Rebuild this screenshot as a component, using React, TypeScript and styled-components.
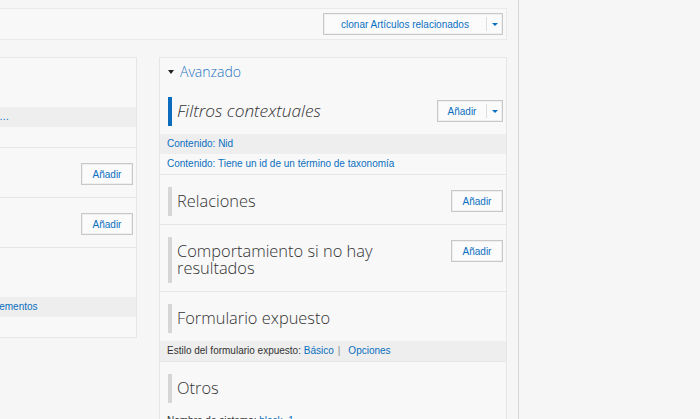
import React from "react";
import styled, { createGlobalStyle, css } from "styled-components";

const GlobalStyle = createGlobalStyle`
  html, body { margin: 0; padding: 0; background: #f6f6f6; }
  body {
    font-family: "Liberation Sans", Arial, sans-serif;
    font-size: 10px;
    color: #333;
    overflow: hidden;
  }
  * { box-sizing: border-box; }
`;

const BLUE = "#0a6fbf";

const Page = styled.div`
  width: 519px;
  height: 419px;
  padding: 8px 11px 0 0;
  border-right: 1px solid #d8d8d8;
  overflow: hidden;
`;

const TopBar = styled.div`
  height: 32px;
  display: flex;
  justify-content: flex-end;
  align-items: center;
  padding-right: 3px;
  border: 1px solid #e9e9e9;
  border-left: none;
  background: #f8f8f8;
`;

const Columns = styled.div`
  display: flex;
  align-items: flex-start;
  gap: 22px;
  margin-top: 17px;
`;

const Panel = styled.div<{ $cut?: boolean }>`
  background: #f8f8f8;
  border: 1px solid #e6e6e6;
  border-bottom: none;
  min-width: 0;
  overflow: hidden;
  ${(p) =>
    p.$cut
      ? css`
          flex: none;
          width: 307px;
          margin-left: -170px;
        `
      : css`
          flex: 1;
        `}
`;

const Toggle = styled.div`
  height: 27px;
  display: flex;
  align-items: center;
  gap: 6px;
  padding: 0 8px;
  font-family: "Open Sans", sans-serif;
  font-weight: 300;
  font-size: 14px;
  color: #1f74c2;
`;

const DarkCaret = styled.span`
  width: 0;
  height: 0;
  border-left: 3.5px solid transparent;
  border-right: 3.5px solid transparent;
  border-top: 4px solid #222;
  margin-top: 1px;
`;

const Section = styled.div<{ $bordered?: boolean }>`
  border-bottom: ${(p) => (p.$bordered === false ? "none" : "1px solid #e6e6e6")};
`;

const Header = styled.div`
  display: flex;
  justify-content: space-between;
  align-items: flex-start;
  gap: 8px;
  padding: 12px 3px 8px 8px;
`;

const Title = styled.h2<{ $accent?: boolean; $italic?: boolean }>`
  margin: 0;
  max-width: 250px;
  padding: 5px 0 7px 5px;
  border-left: 4px solid ${(p) => (p.$accent ? "#0b6cbd" : "#d6d6d6")};
  font-family: "Open Sans", sans-serif;
  font-weight: 300;
  font-size: ${(p) => (p.$italic ? "17.3px" : "16.4px")};
  line-height: 17px;
  color: #333;
  white-space: normal;
  font-style: ${(p) => (p.$italic ? "italic" : "normal")};
`;

const Button = styled.button<{ $w: number }>`
  flex: none;
  width: ${(p) => p.$w}px;
  height: 22px;
  margin-top: 3px;
  padding: 0;
  display: flex;
  align-items: center;
  border: 1px solid #c8c8c8;
  box-shadow: inset 0 0 0 1px #efefef;
  background: #fbfbfb;
  color: ${BLUE};
  font-family: "Liberation Sans", Arial, sans-serif;
  font-size: 10px;
  cursor: pointer;
`;

const ButtonLabel = styled.span`
  flex: 1;
  text-align: center;
`;

const ButtonToggle = styled.span`
  flex: none;
  width: 16px;
  height: 14px;
  display: flex;
  align-items: center;
  justify-content: center;
  border-left: 1px solid #dedede;
`;

const BlueCaret = styled.span`
  width: 0;
  height: 0;
  border-left: 3px solid transparent;
  border-right: 3px solid transparent;
  border-top: 3px solid ${BLUE};
`;

const TopButton = styled(Button)`
  margin-top: 0;
`;

const Row = styled.div<{ $shaded?: boolean }>`
  padding: 3px 7px;
  line-height: 14px;
  font-size: 10px;
  white-space: nowrap;
  color: #333;
  background: ${(p) => (p.$shaded ? "#eeeeee" : "transparent")};
`;

const Link = styled.a`
  color: ${BLUE};
  text-decoration: none;
`;

const Sep = styled.span`
  margin: 0 8px 0 4px;
  color: #888;
`;

type Setting = { label?: string; link: string; shaded?: boolean };

const AddButton = ({ split }: { split?: boolean }) =>
  split ? (
    <Button $w={66}>
      <ButtonLabel>Añadir</ButtonLabel>
      <ButtonToggle>
        <BlueCaret />
      </ButtonToggle>
    </Button>
  ) : (
    <Button $w={52}>
      <ButtonLabel>Añadir</ButtonLabel>
    </Button>
  );

const Block = ({
  title,
  accent,
  italic,
  button,
  split,
  rows = [],
  bordered,
}: {
  title: string;
  accent?: boolean;
  italic?: boolean;
  button?: boolean;
  split?: boolean;
  rows?: Setting[];
  bordered?: boolean;
}) => (
  <Section $bordered={bordered}>
    <Header>
      <Title $accent={accent} $italic={italic}>
        {title}
      </Title>
      {button && <AddButton split={split} />}
    </Header>
    {rows.map((r, i) => (
      <Row key={i} $shaded={r.shaded}>
        {r.label && <>{r.label} </>}
        <Link href="#">{r.link}</Link>
      </Row>
    ))}
  </Section>
);

export default function App() {
  return (
    <>
      <GlobalStyle />
      <Page>
        <TopBar>
          <TopButton $w={180}>
            <ButtonLabel>clonar Artículos relacionados</ButtonLabel>
            <ButtonToggle>
              <BlueCaret />
            </ButtonToggle>
          </TopButton>
        </TopBar>
        <Columns>
          <Panel $cut>
            <Block
              title="Bloque"
              rows={[
                { label: "Descripción del bloque:", link: "Artículos del…", shaded: true },
                { label: "Caché:", link: "Ninguno" },
              ]}
            />
            <Block title="Encabezado" button />
            <Block title="Pie de página" button />
            <Block
              title="Paginador"
              rows={[
                { label: "Usar paginador:", link: "Mostrar todos los elementos", shaded: true },
                { label: "Más enlace:", link: "No" },
              ]}
            />
          </Panel>
          <Panel>
            <Toggle>
              <DarkCaret />
              Avanzado
            </Toggle>
            <Block
              title="Filtros contextuales"
              accent
              italic
              button
              split
              rows={[
                { label: "", link: "Contenido: Nid", shaded: true },
                { label: "", link: "Contenido: Tiene un id de un término de taxonomía" },
              ]}
            />
            <Block title="Relaciones" button />
            <Block title="Comportamiento si no hay resultados" button />
            <Section>
              <Header>
                <Title>Formulario expuesto</Title>
              </Header>
              <Row $shaded>
                Estilo del formulario expuesto: <Link href="#">Básico</Link>
                <Sep>|</Sep>
                <Link href="#">Opciones</Link>
              </Row>
            </Section>
            <Block
              title="Otros"
              bordered={false}
              rows={[{ label: "Nombre de sistema:", link: "block_1" }]}
            />
          </Panel>
        </Columns>
      </Page>
    </>
  );
}
